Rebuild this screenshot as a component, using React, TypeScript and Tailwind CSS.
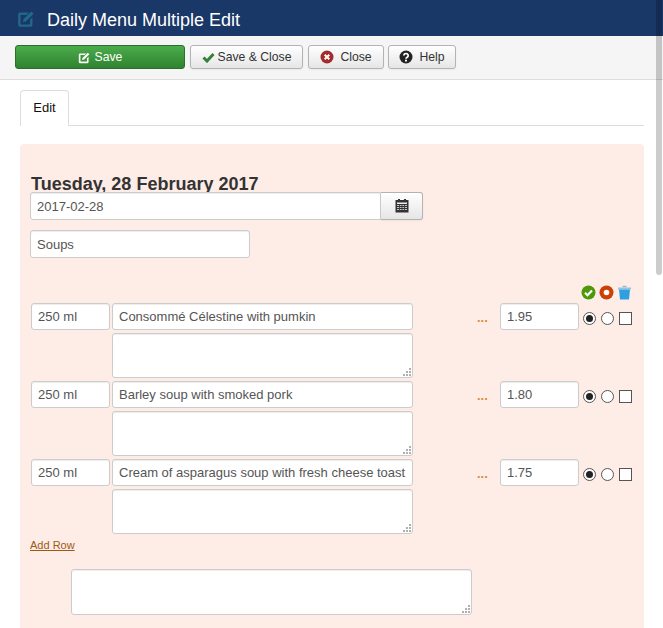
const rows = [
  { size: "250 ml", name: "Consommé Célestine with pumkin", price: "1.95" },
  { size: "250 ml", name: "Barley soup with smoked pork", price: "1.80" },
  { size: "250 ml", name: "Cream of asparagus soup with fresh cheese toast", price: "1.75" },
];

const field =
  "rounded-[3px] border border-[#cccccc] bg-white px-[6px] text-[13px] text-[#555555] shadow-[inset_0_1px_1px_rgba(0,0,0,0.075)] outline-none";

const btn =
  "flex h-[24px] items-center justify-center rounded-[3px] border border-[#b3b3b3] bg-gradient-to-b from-white to-[#e6e6e6] text-[12.2px] text-[#333333] shadow-[0_1px_2px_rgba(0,0,0,0.05)]";

function EditIcon({ size, className }: { size: number; className: string }) {
  return (
    <svg width={size} height={size} viewBox="0 0 16 16" fill="currentColor" className={className}>
      <path d="M2.5 3H10L8 5H3v8h8V9l2-2v6.5a1.5 1.5 0 0 1-1.5 1.5h-9A1.5 1.5 0 0 1 1 13.5v-9A1.5 1.5 0 0 1 2.5 3z" />
      <path d="M5.5 8.5L12 2l2 2-6.500 6.500-2.500.5z" />
    </svg>
  );
}

function Memo({ className }: { className: string }) {
  return (
    <div className={`relative ${className}`}>
      <textarea
        readOnly
        className="block h-full w-full resize-none rounded-[3px] border border-[#cccccc] bg-white shadow-[inset_0_1px_1px_rgba(0,0,0,0.075)] outline-none"
      />
      <svg width="8" height="8" viewBox="0 0 8 8" fill="#b0b0b0" className="absolute bottom-[2px] right-[2px]">
        <rect x="6" y="0" width="2" height="2" />
        <rect x="3" y="3" width="2" height="2" />
        <rect x="6" y="3" width="2" height="2" />
        <rect x="0" y="6" width="2" height="2" />
        <rect x="3" y="6" width="2" height="2" />
        <rect x="6" y="6" width="2" height="2" />
      </svg>
    </div>
  );
}

function Row({ size, name, price }: { size: string; name: string; price: string }) {
  return (
    <div className="flex items-start">
      <input readOnly value={size} className={`${field} ml-px h-[27px] w-[79px]`} />
      <div className="ml-[2px] flex w-[301px] flex-col gap-[3px]">
        <input readOnly value={name} className={`${field} h-[27px] w-full`} />
        <Memo className="h-[45px] w-full" />
      </div>
      <span className="ml-[64px] w-[23px] pt-[6px] text-[13px] font-bold leading-[18px] text-[#e08a3c]">...</span>
      <input readOnly value={price} className={`${field} h-[27px] w-[79px]`} />
      <div className="ml-[4px] flex h-[27px] items-center gap-[5px] pt-[4px]">
        <span className="flex h-[13px] w-[13px] items-center justify-center rounded-full border border-[#555555] bg-white">
          <span className="h-[7px] w-[7px] rounded-full bg-[#222222]" />
        </span>
        <span className="h-[13px] w-[13px] rounded-full border border-[#555555] bg-white" />
        <span className="h-[13px] w-[13px] border border-[#555555] bg-white" />
      </div>
    </div>
  );
}

export default function App() {
  return (
    <div className="relative h-[628px] w-[663px] overflow-hidden bg-white font-['Liberation_Sans',Arial,sans-serif]">
      <div className="flex h-[36px] items-center bg-[#1a3867] pl-[17px]">
        <EditIcon size={19} className="text-[#22678c]" />
        <h1 className="ml-[11px] pt-[3px] text-[18px] leading-none text-white">Daily Menu Multiple Edit</h1>
      </div>

      <div className="flex h-[44px] border-b border-[#dddddd] bg-[#f5f5f5] pl-[15px] pt-[9px]">
        <button className="flex h-[24px] w-[170px] items-center justify-center gap-[4px] rounded-[3px] border border-[#2c6f2c] bg-gradient-to-b from-[#4cab4c] to-[#2f842f] text-[12.2px] text-white">
          <EditIcon size={13} className="text-white" />
          Save
        </button>
        <button className={`${btn} ml-[5px] w-[113px] gap-[3px]`}>
          <svg width="13" height="11" viewBox="0 0 13 11">
            <path d="M1.500 5.500l3.500 3.500 6.500-7" fill="none" stroke="#378137" strokeWidth="3" />
          </svg>
          Save &amp; Close
        </button>
        <button className={`${btn} ml-[5px] w-[76px] gap-[6px]`}>
          <svg width="14" height="14" viewBox="0 0 14 14">
            <circle cx="7" cy="7" r="6.500" fill="#a52a2a" />
            <path d="M4.700 4.700l4.600 4.600M9.300 4.700l-4.600 4.600" stroke="white" strokeWidth="2" />
          </svg>
          Close
        </button>
        <button className={`${btn} ml-[4px] w-[68px] gap-[6px]`}>
          <svg width="14" height="14" viewBox="0 0 14 14">
            <circle cx="7" cy="7" r="6.500" fill="#222222" />
            <path d="M4.800 5.500a2.200 2 0 1 1 3.400 1.700C7.400 7.700 7 8 7 8.800" fill="none" stroke="white" strokeWidth="1.700" />
            <rect x="6" y="9.700" width="2" height="1.800" fill="white" />
          </svg>
          Help
        </button>
      </div>

      <div className="mx-[20px] mt-[10px] flex h-[36px] w-[624px] border-b border-[#dddddd]">
        <div className="h-[36px] w-[49px] rounded-t-[4px] border border-b-0 border-[#dddddd] bg-white text-center text-[13px] leading-[34px] text-[#111111]">
          Edit
        </div>
      </div>

      <div className="mx-[20px] mt-[18px] h-[500px] w-[624px] rounded-t-[4px] bg-[#feece6] pl-[10px]">
        <h2 className="h-[48px] pl-px pt-[30px] text-[18px] font-bold leading-[20px] text-[#333333]">
          Tuesday, 28 February 2017
        </h2>
        <div className="relative flex">
          <input readOnly value="2017-02-28" className={`${field} h-[28px] w-[351px] rounded-r-none`} />
          <button className={`${btn} h-[28px] w-[42px] rounded-l-none border-l-0`}>
            <svg width="14" height="14" viewBox="0 0 14 14">
              <rect x="0.500" y="1" width="13" height="12.500" fill="#333333" />
              <rect x="3" y="0" width="2" height="2.500" fill="#333333" />
              <rect x="9" y="0" width="2" height="2.500" fill="#333333" />
              <rect x="2" y="3.500" width="10" height="1.500" fill="#eeeeee" />
              <path d="M2 6.500h10M2 8.500h10M2 10.500h10" stroke="#c4c4c4" strokeWidth="1" />
              <path d="M4.500 6v6M7 6v6M9.500 6v6" stroke="#333333" strokeWidth="0.800" />
            </svg>
          </button>
        </div>
        <input readOnly value="Soups" className={`${field} mt-[10px] block h-[28px] w-[220px]`} />

        <div className="mt-[26px] flex h-[19px] items-start gap-[3px] pl-[551px] pt-px">
          <svg width="15" height="15" viewBox="0 0 15 15">
            <circle cx="7.500" cy="7.500" r="7" fill="#4c9a0a" />
            <path d="M4 7.800l2.500 2.500L11 5.600" fill="none" stroke="white" strokeWidth="2.200" />
          </svg>
          <svg width="15" height="15" viewBox="0 0 15 15">
            <circle cx="7.500" cy="7.500" r="7" fill="#cc3f05" />
            <circle cx="7.500" cy="7.500" r="2.800" fill="white" />
          </svg>
          <svg width="15" height="15" viewBox="0 0 15 15">
            <path d="M5.500 1.500h4" stroke="#9fb4bf" strokeWidth="1.400" />
            <rect x="1" y="2.500" width="13" height="2" fill="#8fc4e2" />
            <path d="M2 4.500h11l-1 10H3z" fill="#2f9fe0" />
          </svg>
        </div>

        <div className="flex flex-col gap-[3px]">
          {rows.map((r) => (
            <Row key={r.name} {...r} />
          ))}
        </div>

        <a href="#" className="mt-[4px] block text-[11px] leading-[14px] text-[#9a5a14] underline">
          Add Row
        </a>
        <Memo className="ml-[41px] mt-[17px] h-[46px] w-[401px]" />
      </div>

      <div className="absolute right-[1px] top-0 h-[275px] w-[6px] rounded-b-[3px] bg-black/20" />
    </div>
  );
}
